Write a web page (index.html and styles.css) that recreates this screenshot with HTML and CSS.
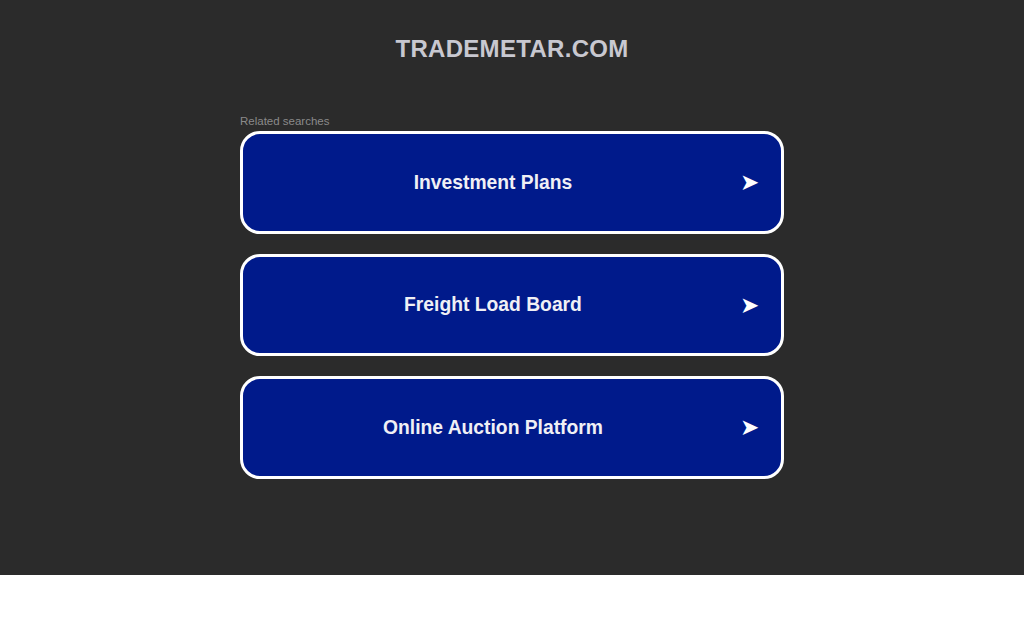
FILE: index.html
```html
<!DOCTYPE html>
<html>
<head>
<meta charset="utf-8">
<link rel="stylesheet" href="styles.css">
</head>
<body>
<div class="page">
  <h1 class="domain">TRADEMETAR.COM</h1>
  <div class="wrap">
    <div class="label">Related searches</div>
    <div class="list">
      <a class="item"><span class="text">Investment Plans</span><span class="arrow">➤</span></a>
      <a class="item"><span class="text">Freight Load Board</span><span class="arrow">➤</span></a>
      <a class="item"><span class="text">Online Auction Platform</span><span class="arrow">➤</span></a>
    </div>
  </div>
</div>
</body>
</html>
```
FILE: styles.css
```css
html, body { margin: 0; padding: 0; background: #fff; }
body { font-family: "Liberation Sans", Arial, sans-serif; }
.page {
  background: #2b2b2b;
  height: 575px;
  box-sizing: border-box;
  padding-top: 35px;
}
.domain {
  margin: 0;
  text-align: center;
  font-size: 24px;
  line-height: 28px;
  font-weight: bold;
  color: #c8c8d0;
  letter-spacing: 0.3px;
}
.wrap {
  width: 544px;
  margin: 52px auto 0;
}
.label {
  font-size: 11.5px;
  line-height: 13px;
  color: #8a8a8a;
  margin-bottom: 3px;
}
.list { display: flex; flex-direction: column; gap: 20px; }
.item {
  display: flex;
  align-items: center;
  height: 102.6px;
  box-sizing: border-box;
  border: 3px solid #fff;
  border-radius: 20px;
  background: #001a8b;
  color: #f0f0f5;
  text-decoration: none;
}
.text {
  flex: 1;
  text-align: center;
  font-size: 19.3px;
  font-weight: bold;
  padding-left: 3px;
  padding-top: 1px;
}
.arrow {
  width: 38px;
  margin-right: 3px;
  font-size: 23px;
  text-align: left;
  color: #fff;
  font-family: "DejaVu Sans", sans-serif;
}
```
